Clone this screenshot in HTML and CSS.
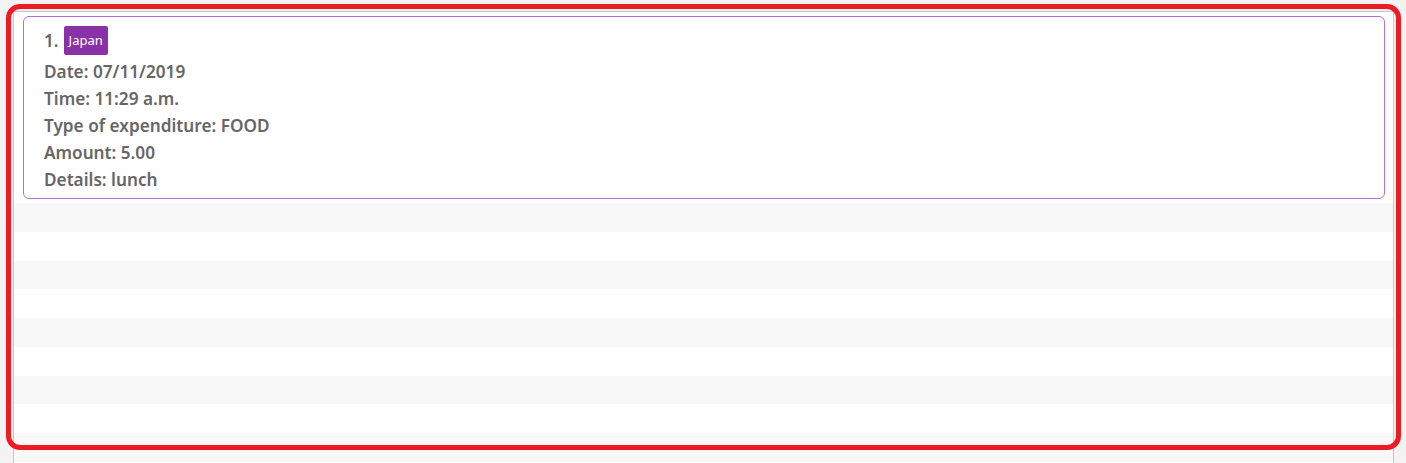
FILE: index.html
```html
<!DOCTYPE html>
<html>
<head>
<meta charset="utf-8">
<link rel="stylesheet" href="styles.css">
</head>
<body>
<div class="list">
  <div class="row row-card">
    <div class="card">
      <div class="title"><span class="idx">1.</span><span class="badge">Japan</span></div>
      <div class="line">Date: 07/11/2019</div>
      <div class="line">Time: 11:29 a.m.</div>
      <div class="line">Type of expenditure: FOOD</div>
      <div class="line">Amount: 5.00</div>
      <div class="line">Details: lunch</div>
    </div>
  </div>
  <div class="row odd"></div>
  <div class="row"></div>
  <div class="row odd"></div>
  <div class="row"></div>
  <div class="row odd"></div>
  <div class="row"></div>
  <div class="row odd"></div>
  <div class="row"></div>
  <div class="row odd"></div>
</div>
<div class="highlight"></div>
</body>
</html>
```
FILE: styles.css
```css
html, body {
  margin: 0;
  padding: 0;
}
body {
  background: #f3f3f3;
  width: 1406px;
  height: 463px;
  overflow: hidden;
  position: relative;
  padding: 11px 0 0 13px;
  box-sizing: border-box;
  font-family: "Noto Sans", "Open Sans", sans-serif;
}
.list {
  width: 1381px;
  height: 470px;
  box-sizing: border-box;
  border: 1px solid #c8c8c8;
  background: #ffffff;
  display: flex;
  flex-direction: column;
}
.row {
  height: 28.75px;
  flex: none;
}
.row.odd {
  background: #f8f8f8;
}
.row-card {
  height: auto;
  padding: 4px 8px 4px 9px;
}
.card {
  border: 1px solid #b46ed6;
  border-radius: 6px;
  background: #fff;
  padding: 8px 20px 6px 20px;
  color: #666666;
  font-size: 17.2px;
  font-weight: 600;
  height: 183px;
  box-sizing: border-box;
}
.title {
  display: flex;
  align-items: center;
  height: 31px;
  margin-bottom: 2px;
}
.idx {
  margin-right: 5px;
}
.badge {
  background: #8932a8;
  color: #fff;
  font-size: 13px;
  font-weight: 400;
  border-radius: 2px;
  height: 29px;
  line-height: 29px;
  padding: 0 5px;
}
.line {
  line-height: 27px;
}
.highlight {
  position: absolute;
  left: 6px;
  top: 4px;
  width: 1395px;
  height: 446px;
  box-sizing: border-box;
  border: 5px solid #ed1c24;
  border-radius: 14px;
  pointer-events: none;
}
```
